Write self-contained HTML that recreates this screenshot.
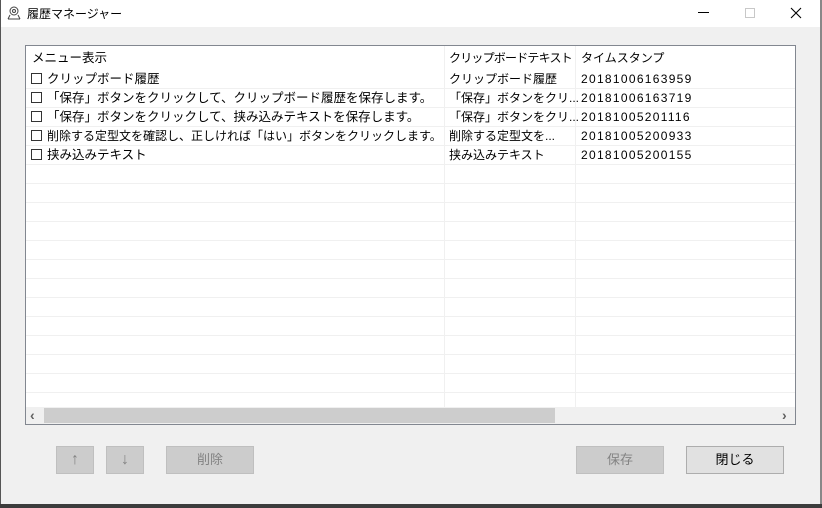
<!DOCTYPE html>
<html><head><meta charset="utf-8"><style>
*{margin:0;padding:0;box-sizing:border-box}
body{width:822px;height:508px;background:#f0f0f0;position:relative;overflow:hidden;font-family:"Liberation Sans","Noto Sans CJK JP",sans-serif;font-size:12px;color:#000}
.abs{position:absolute}
.title{left:0;top:0;width:822px;height:27px;background:#fff}
.lb{left:25px;top:45px;width:771px;height:380px;border:1px solid #828790;background:#fff;overflow:hidden}
.row{position:absolute;left:0;width:769px;height:19px;border-bottom:1px solid #f0f0f0;line-height:18px;white-space:nowrap}
.c{position:absolute;top:0}
.c1{font-size:12.5px}
.d{letter-spacing:1.3px}
.vl{position:absolute;top:0;width:1px;height:361px;background:#f0f0f0}
.cb{display:inline-block;width:11px;height:11px;border:1px solid #333;vertical-align:-1px;margin-right:5px}
.btn{position:absolute;top:446px;height:28px;border:1px solid #bfbfbf;background:#cccccc;color:#838383;text-align:center;line-height:26px;font-size:13px}
</style></head><body>
<div class="abs title"></div>
<div class="abs" style="left:0;top:0;width:1px;height:508px;background:#555"></div>
<div class="abs" style="left:820px;top:0;width:2px;height:508px;background:#888"></div>
<div class="abs" style="left:0;top:504px;width:822px;height:4px;background:#3c3c3c"></div>
<svg class="abs" style="left:6px;top:5px" width="16" height="16" viewBox="0 0 16 16" fill="none" stroke="#444" stroke-width="1"><circle cx="8" cy="6" r="4"/><circle cx="8" cy="6" r="1.5"/><path d="M2 14h12M4 10l-2 4M12 10l2 4"/></svg>
<div class="abs" style="left:27px;top:5px;font-size:12px">履歴マネージャー</div>
<div class="abs" style="left:698px;top:12px;width:11px;height:1px;background:#000"></div>
<div class="abs" style="left:745px;top:8px;width:10px;height:10px;border:1px solid #c8c8c8"></div>
<svg class="abs" style="left:790px;top:7px" width="12" height="12"><path d="M1 1L11 11M11 1L1 11" stroke="#000" stroke-width="1.1"/></svg>

<div class="abs lb">
 <div class="vl" style="left:418px"></div>
 <div class="vl" style="left:549px"></div>
 <div class="row" style="top:0;height:24px;line-height:24px;border-bottom:none">
  <span class="c c1" style="left:6px">メニュー表示</span><span class="c" style="left:423px;letter-spacing:-0.8px">クリップボードテキスト</span><span class="c" style="left:555px">タイムスタンプ</span></div>
 <div class="row" style="top:24px"><span class="c c1" style="left:5px"><span class="cb"></span>クリップボード履歴</span><span class="c" style="left:423px">クリップボード履歴</span><span class="c d" style="left:555px">20181006163959</span></div>
 <div class="row" style="top:43px"><span class="c c1" style="left:5px"><span class="cb"></span>「保存」ボタンをクリックして、クリップボード履歴を保存します。</span><span class="c" style="left:419px;background:#fff;padding-left:4px;width:130px">「保存」ボタンをクリ...</span><span class="c d" style="left:555px">20181006163719</span></div>
 <div class="row" style="top:62px"><span class="c c1" style="left:5px"><span class="cb"></span>「保存」ボタンをクリックして、挟み込みテキストを保存します。</span><span class="c" style="left:419px;background:#fff;padding-left:4px;width:130px">「保存」ボタンをクリ...</span><span class="c d" style="left:555px">20181005201116</span></div>
 <div class="row" style="top:81px"><span class="c" style="left:5px"><span class="cb"></span>削除する定型文を確認し、正しければ「はい」ボタンをクリックします。</span><span class="c" style="left:419px;background:#fff;padding-left:4px;width:130px">削除する定型文を...</span><span class="c d" style="left:555px">20181005200933</span></div>
 <div class="row" style="top:100px"><span class="c c1" style="left:5px"><span class="cb"></span>挟み込みテキスト</span><span class="c" style="left:423px">挟み込みテキスト</span><span class="c d" style="left:555px">20181005200155</span></div>
 <div class="row" style="top:119px"></div><div class="row" style="top:138px"></div><div class="row" style="top:157px"></div><div class="row" style="top:176px"></div><div class="row" style="top:195px"></div><div class="row" style="top:214px"></div><div class="row" style="top:233px"></div><div class="row" style="top:252px"></div><div class="row" style="top:271px"></div><div class="row" style="top:290px"></div><div class="row" style="top:309px"></div><div class="row" style="top:328px"></div>
 <div style="position:absolute;left:0;top:361px;width:769px;height:17px;background:#f0f0f0"></div>
 <div style="position:absolute;left:18px;top:362px;width:511px;height:15px;background:#cdcdcd"></div>
 <div style="position:absolute;left:4px;top:361px;font-size:14px;font-weight:bold;line-height:17px;color:#606060">&#8249;</div>
 <div style="position:absolute;left:756px;top:361px;font-size:14px;font-weight:bold;line-height:17px;color:#606060">&#8250;</div>
</div>

<div class="btn" style="left:56px;width:38px;font-size:16px">↑</div>
<div class="btn" style="left:106px;width:38px;font-size:16px">↓</div>
<div class="btn" style="left:166px;width:88px">削除</div>
<div class="btn" style="left:576px;width:88px">保存</div>
<div class="btn" style="left:686px;width:98px;background:#e1e1e1;border-color:#adadad;color:#000">閉じる</div>
</body></html>
